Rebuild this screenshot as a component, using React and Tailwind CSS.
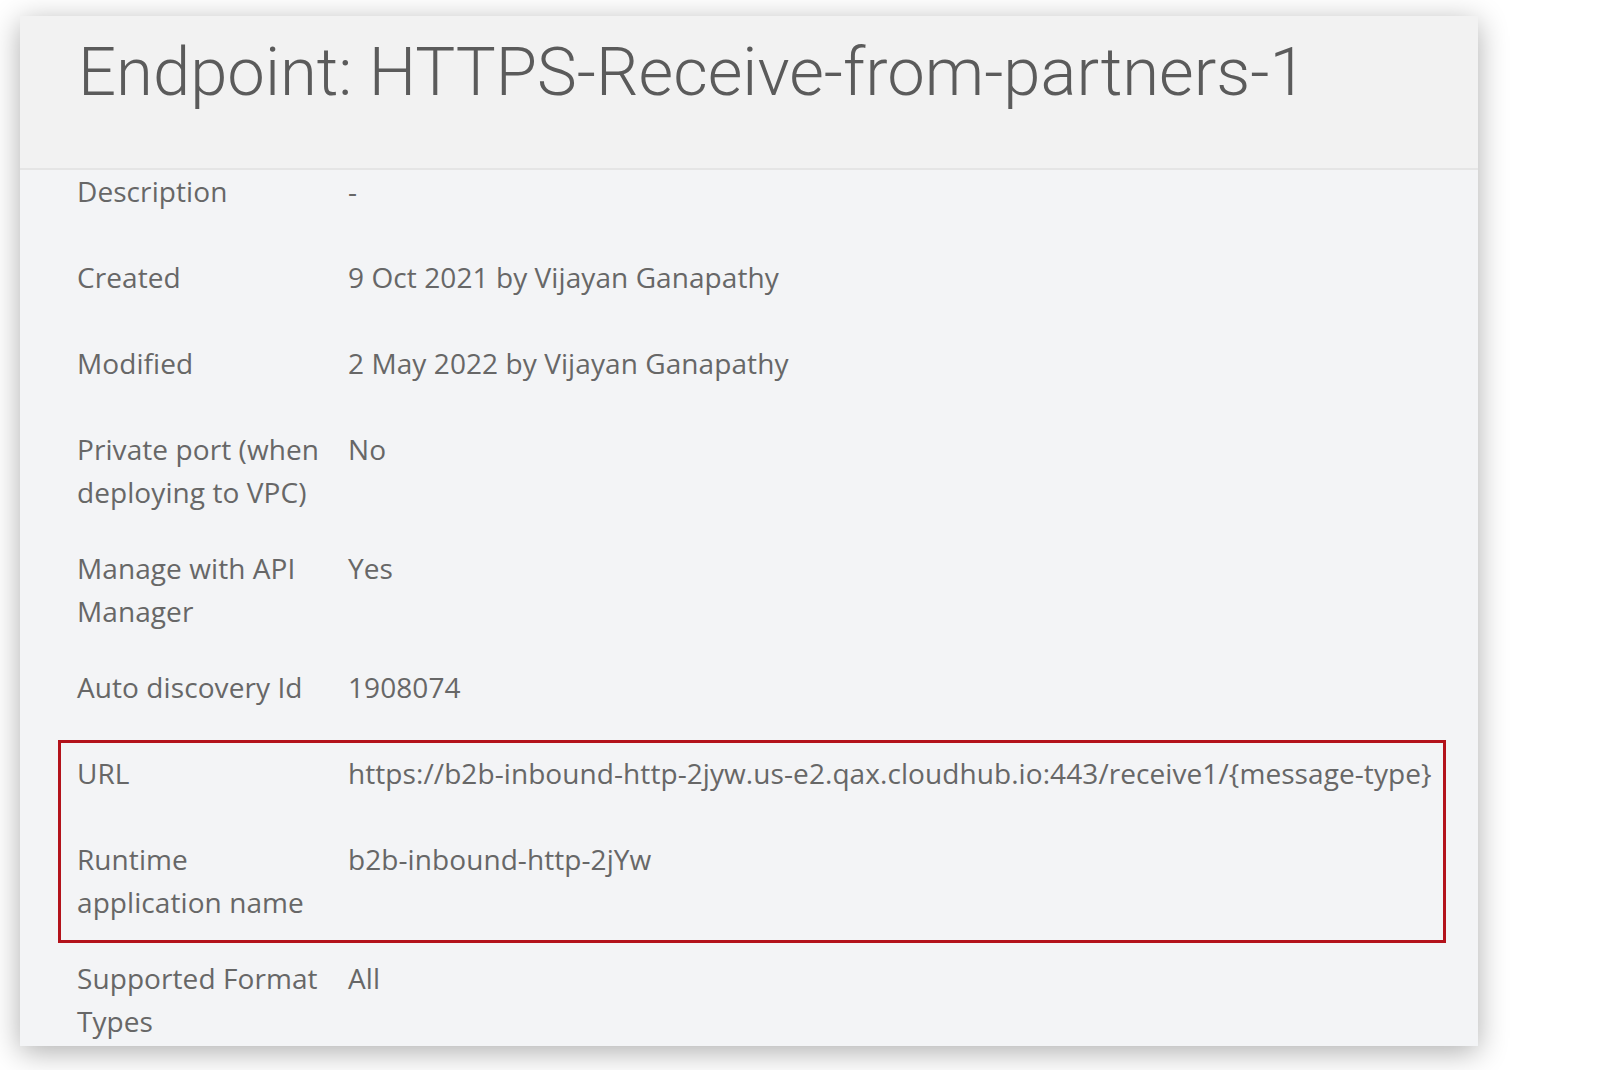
const rows = [
  { label: "Description", value: "-" },
  { label: "Created", value: "9 Oct 2021 by Vijayan Ganapathy" },
  { label: "Modified", value: "2 May 2022 by Vijayan Ganapathy" },
  { label: "Private port (when deploying to VPC)", value: "No" },
  { label: "Manage with API Manager", value: "Yes" },
  { label: "Auto discovery Id", value: "1908074" },
];

const highlighted = [
  {
    label: "URL",
    value:
      "https://b2b-inbound-http-2jyw.us-e2.qax.cloudhub.io:443/receive1/{message-type}",
  },
  { label: "Runtime application name", value: "b2b-inbound-http-2jYw" },
];

const after = [{ label: "Supported Format Types", value: "All" }];

function Row({ label, value }) {
  return (
    <div className="flex min-h-[86px] pb-[33px] text-[28px] leading-[43px] tracking-[0.08px] text-[#676767]">
      <div className="w-[271px] shrink-0 pr-[14px]">{label}</div>
      <div className="whitespace-nowrap">{value}</div>
    </div>
  );
}

export default function App() {
  return (
    <div className="min-h-screen bg-white pl-[20px] pt-[16px]">
      <div className="h-[1030px] w-[1458px] overflow-hidden bg-[#f3f4f6] shadow-[0_6px_28px_rgba(0,0,0,0.32)]">
        {/* Header */}
        <div className="h-[154px] border-b-2 border-[#e5e5e5] bg-[#f2f2f2] pl-[58px] pt-[16px]">
          <h1
            className="text-[67px] font-light leading-[80px] text-[#5b5b5b]"
            style={{ fontFamily: "Roboto, 'Liberation Sans', sans-serif" }}
          >
            Endpoint: HTTPS-Receive-from-partners-1
          </h1>
        </div>

        {/* Details */}
        <div
          className="pl-[57px]"
          style={{ fontFamily: "'Open Sans', 'Liberation Sans', sans-serif" }}
        >
          {rows.map((r) => (
            <Row key={r.label} {...r} />
          ))}

          <div className="relative">
            <div className="pointer-events-none absolute -top-[12px] bottom-[14px] -left-[19px] right-[32px] border-[3px] border-[#b3121b]" />
            {highlighted.map((r) => (
              <Row key={r.label} {...r} />
            ))}
          </div>

          {after.map((r) => (
            <Row key={r.label} {...r} />
          ))}
        </div>
      </div>
    </div>
  );
}
